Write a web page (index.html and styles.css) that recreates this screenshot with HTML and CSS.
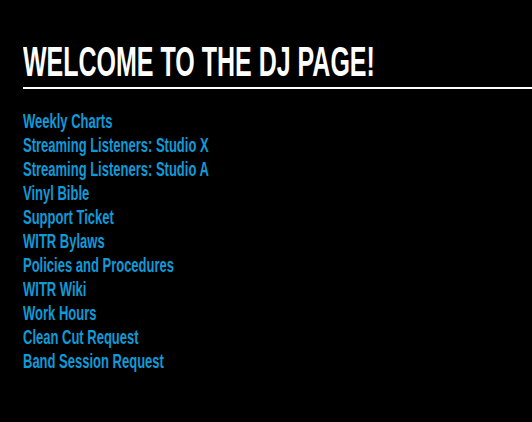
FILE: index.html
```html
<!DOCTYPE html>
<html>
<head>
<meta charset="utf-8">
<link rel="stylesheet" href="styles.css">
</head>
<body>
<main class="page">
  <h1 class="title"><span class="title-text">WELCOME TO THE DJ PAGE!</span></h1>
  <ul class="links">
    <li><a href="#">Weekly Charts</a></li>
    <li><a href="#">Streaming Listeners: Studio X</a></li>
    <li><a href="#">Streaming Listeners: Studio A</a></li>
    <li><a href="#">Vinyl Bible</a></li>
    <li><a href="#">Support Ticket</a></li>
    <li><a href="#">WITR Bylaws</a></li>
    <li><a href="#">Policies and Procedures</a></li>
    <li><a href="#">WITR Wiki</a></li>
    <li><a href="#">Work Hours</a></li>
    <li><a href="#">Clean Cut Request</a></li>
    <li><a href="#">Band Session Request</a></li>
  </ul>
</main>
</body>
</html>
```
FILE: styles.css
```css
html, body {
  margin: 0;
  padding: 0;
  background: #000;
  height: 100%;
}
.page {
  padding: 39.5px 0 0 23px;
  font-family: "Liberation Sans", Arial, sans-serif;
  font-weight: bold;
}
.title {
  margin: 0;
  font-size: 25px;
  line-height: 25px;
  font-weight: bold;
  color: #fff;
  padding-bottom: 22.5px;
  border-bottom: 2px solid #fff;
  white-space: nowrap;
}
.title-text {
  display: block;
  transform: scaleY(1.72);
  transform-origin: 0 0;
}
.links {
  list-style: none;
  margin: 21px 0 0;
  padding: 0;
  font-size: 13px;
  line-height: 16px;
  transform: scaleY(1.5);
  transform-origin: 0 0;
  white-space: nowrap;
}
.links a {
  color: #0f9ad8;
  text-decoration: none;
}
```
